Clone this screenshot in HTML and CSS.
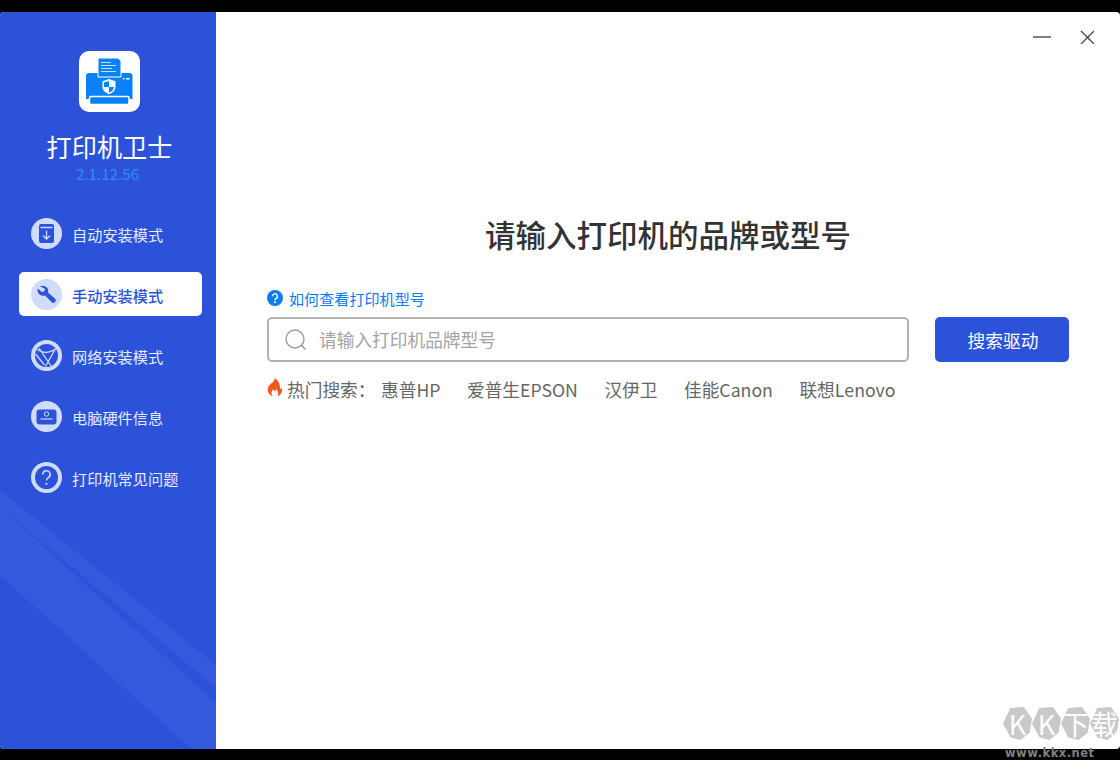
FILE: index.html
```html
<!DOCTYPE html>
<html lang="zh-CN">
<head>
<meta charset="utf-8">
<title>打印机卫士</title>
<link rel="stylesheet" href="styles.css">
</head>
<body>
<div class="app">
  <aside class="sidebar">
    <svg class="bands" viewBox="0 0 216 737" width="216" height="737" aria-hidden="true">
      <path d="M0 478L216 653V676L0 495Z" fill="#3459dc"/>
      <path d="M0 495L216 691V737H191L0 563Z" fill="#3459dc"/>
    </svg>
    <div class="brand">
      <div class="logo">
        <svg viewBox="0 0 61 61" width="61" height="61">
          <path d="M7 25a3 3 0 0 1 3-3h40.500a3 3 0 0 1 3 3v23H7Z" fill="#0a82f7"/>
          <path d="M19 8.500a1.500 1.500 0 0 1 1.500-1.500H39l3 3V26H19Z" fill="#0a82f7" stroke="#fff" stroke-width="1"/>
          <path d="M22 11.500h10M22 14.500h15M22 17.500h11M22 20.500h15" stroke="#bfe0ff" stroke-width="1.100"/>
          <rect x="44" y="27" width="1.500" height="1.500" fill="#fff"/>
          <rect x="47" y="27" width="3.500" height="1.500" fill="#fff"/>
          <path d="M30 28l6.500 2.200v5.300c0 4-3 6.500-6.500 7.800-3.500-1.300-6.500-3.800-6.500-7.800v-5.300Z" fill="#fff"/>
          <path d="M30 30v6h-5v-4.500ZM30 36h5c-.4 3-2.500 4.800-5 5.700Z" fill="#0a82f7"/>
          <rect x="10.500" y="45.500" width="39.500" height="8" rx="1.500" fill="#0a82f7" stroke="#fff" stroke-width="1.500"/>
        </svg>
      </div>
      <div class="app-name">打印机卫士</div>
      <div class="version">2.1.12.56</div>
    </div>
    <nav class="nav">
      <a class="nav-item">
        <span class="nav-icon">
          <svg viewBox="0 0 31 31" width="31" height="31">
            <path d="M8 8a2 2 0 0 1 2-2h11a2 2 0 0 1 2 2v15a2 2 0 0 1-2 2H10a2 2 0 0 1-2-2Z" fill="#2d52da"/>
            <path d="M9.500 9.500h12M15.500 12.500v8M12 17.500l3.500 3.500 3.500-3.500" fill="none" stroke="#d0dcfe" stroke-width="1.300"/>
          </svg>
        </span>
        <span class="nav-label">自动安装模式</span>
      </a>
      <a class="nav-item active">
        <span class="nav-icon">
          <svg viewBox="0 0 31 31" width="31" height="31">
            <path d="M9 7.500a5.800 5.800 0 0 1 6.800 1c1.500 1.600 1.800 3.400 1.200 5.100l7.400 6.400a2.500 2.500 0 0 1-3.400 3.500l-6.900-7.100a5.600 5.600 0 0 1-7.200-7l3.900 3.500 2.500-.7.700-2.500Z" fill="#2d52da"/>
          </svg>
        </span>
        <span class="nav-label">手动安装模式</span>
      </a>
      <a class="nav-item">
        <span class="nav-icon">
          <svg viewBox="0 0 31 31" width="31" height="31">
            <circle cx="15.500" cy="15.500" r="11.500" fill="#2d52da"/>
            <path d="M6 9.500c6 4 12 4.500 19-1M8 8l12 18M24 9.500l-9.500 17M4.500 14l9 11" fill="none" stroke="#d0dcfe" stroke-width="1.300"/>
          </svg>
        </span>
        <span class="nav-label">网络安装模式</span>
      </a>
      <a class="nav-item">
        <span class="nav-icon">
          <svg viewBox="0 0 31 31" width="31" height="31">
            <rect x="5.500" y="8.500" width="20" height="15" rx="3" fill="#2d52da"/>
            <circle cx="15.500" cy="13" r="2.200" fill="none" stroke="#d0dcfe" stroke-width="1"/>
            <path d="M9.500 18h12" stroke="#d0dcfe" stroke-width="1.200"/>
          </svg>
        </span>
        <span class="nav-label">电脑硬件信息</span>
      </a>
      <a class="nav-item">
        <span class="nav-icon">
          <svg viewBox="0 0 31 31" width="31" height="31">
            <circle cx="15.500" cy="15.500" r="11.500" fill="#2d52da"/>
            <path d="M11.800 12.500a3.700 3.700 0 1 1 5.600 3.100c-1.300.8-1.900 1.400-1.900 3" fill="none" stroke="#d0dcfe" stroke-width="1.500"/>
            <circle cx="15.500" cy="21.800" r="1.100" fill="#d0dcfe"/>
          </svg>
        </span>
        <span class="nav-label">打印机常见问题</span>
      </a>
    </nav>
  </aside>
  <main class="main">
    <div class="window-controls">
      <svg viewBox="0 0 18 14" width="18" height="14"><path d="M0 7H18" stroke="#555" stroke-width="1.300"/></svg>
      <svg viewBox="0 0 14 14" width="14" height="14"><path d="M1 1L14 14M14 1L1 14" stroke="#444" stroke-width="1.300" fill="none"/></svg>
    </div>
    <h1 class="heading">请输入打印机的品牌或型号</h1>
    <div class="search-block">
      <a class="help-link">
        <svg viewBox="0 0 16 16" width="16" height="16">
          <circle cx="8" cy="8" r="8" fill="#0a7cf5"/>
          <path d="M5.600 6.300a2.400 2.400 0 1 1 3.600 2c-.8.500-1.200.9-1.200 1.900" fill="none" stroke="#fff" stroke-width="1.400"/>
          <circle cx="8" cy="12.200" r="1" fill="#fff"/>
        </svg>
        <span>如何查看打印机型号</span>
      </a>
      <div class="search-row">
        <div class="search-input">
          <svg viewBox="0 0 22 22" width="22" height="22" fill="none" stroke="#9c9c9c" stroke-width="1.400">
            <circle cx="10" cy="10" r="9"/>
            <path d="M16.500 16.500L20.500 20.500"/>
          </svg>
          <span class="placeholder">请输入打印机品牌型号</span>
        </div>
        <button class="search-btn">搜索驱动</button>
      </div>
      <div class="hot-row">
        <svg class="flame" viewBox="0 0 16 18" width="16" height="18">
          <path d="M7.500 0c.8 3-4 5.500-6 8.500C-.5 12 1.500 17 5.800 18c-2-2-1.700-4.500.7-7 .3 1.500 1.100 2 1.700 2.500.2-1 .6-2 1.300-2.500.4 2 2.700 3 1 7 3.500-1 5.700-4.500 4.300-8.500-.5 1-1 1.500-1.800 1.800C13.500 7 11.500 2 7.500 0Z" fill="#f4581f"/>
        </svg>
        <span class="hot-label">热门搜索：</span>
        <span class="hot-list">
          <a>惠普HP</a>
          <a>爱普生EPSON</a>
          <a>汉伊卫</a>
          <a>佳能Canon</a>
          <a>联想Lenovo</a>
        </span>
      </div>
    </div>
  </main>
</div>
<div class="watermark">
  <div class="wm-tiles"><span class="tile t1">K</span><span class="tile t2">K</span><span class="tile t3">下</span><span class="tile t4">载</span></div>
  <div class="wm-url">www.kkx.net</div>
</div>
</body>
</html>
```
FILE: styles.css
```css
* { box-sizing: border-box; }
html, body { margin: 0; height: 100%; }
body {
  background: #000;
  padding-top: 12px;
  font-family: "Noto Sans CJK SC", "Noto Sans", sans-serif;
  overflow: hidden;
  position: relative;
}
a { text-decoration: none; color: inherit; }
.app {
  display: flex;
  width: 1120px;
  height: 737px;
  background: #fff;
  border-radius: 4px;
  overflow: hidden;
}
.sidebar {
  position: relative;
  flex: 0 0 216px;
  background: #2d52da;
  color: #fff;
  padding-top: 39px;
  display: flex;
  flex-direction: column;
}
.bands { position: absolute; left: 0; top: 0; }
.brand {
  position: relative;
  display: flex;
  flex-direction: column;
  align-items: center;
  padding-left: 3px;
}
.logo {
  width: 61px;
  height: 61px;
  background: #fff;
  border-radius: 10px;
}
.logo svg { display: block; }
.app-name {
  margin-top: 16px;
  font-size: 25.200px;
  line-height: 36px;
}
.version {
  font-size: 15.200px;
  line-height: 20px;
  margin: -1px 0 0 -4px;
  color: #2f8cee;
}
.nav {
  position: relative;
  margin-top: 28px;
  padding: 0 14px 0 19px;
  display: flex;
  flex-direction: column;
  gap: 17px;
}
.nav-item {
  display: flex;
  align-items: center;
  height: 44px;
  padding-left: 12px;
  border-radius: 5px;
  font-size: 15.200px;
}
.nav-item.active {
  background: #fff;
  font-weight: 500;
}
.nav-icon {
  width: 31px;
  height: 31px;
  border-radius: 50%;
  background: #d0dcfe;
  margin-right: 10px;
  flex: none;
}
.nav-icon svg { display: block; }
.nav-label { color: #e6ecff; line-height: 22px; padding-top: 1px; }
.active .nav-label { color: #2d52da; }
.main {
  flex: 1;
  position: relative;
  padding: 0 51px;
}
.window-controls {
  position: absolute;
  top: 18px;
  right: 26px;
  display: flex;
  align-items: center;
  gap: 29px;
}
.window-controls svg { display: block; }
.heading {
  margin: 200px 0 0;
  text-align: center;
  font-size: 30.500px;
  line-height: 44px;
  font-weight: 500;
  color: #333;
}
.search-block { margin-top: 31px; }
.help-link {
  display: flex;
  align-items: center;
  gap: 6px;
  height: 22px;
  font-size: 15.100px;
  color: #0a7cf5;
}
.search-row {
  display: flex;
  gap: 26px;
  margin-top: 8px;
}
.search-input {
  flex: 0 0 642px;
  height: 45px;
  border: 2px solid #b2b2b2;
  border-radius: 5px;
  display: flex;
  align-items: center;
  padding-left: 16px;
}
.search-input svg { flex: none; }
.placeholder {
  margin-left: 12px;
  font-size: 17.700px;
  color: #a3a3a3;
  padding-bottom: 1px;
}
.search-btn {
  flex: 0 0 134px;
  height: 45px;
  border: 0;
  border-radius: 5px;
  background: #2d52da;
  color: #fff;
  font: inherit;
  font-size: 17.700px;
  padding: 0 0 0 2px;
}
.hot-row {
  display: flex;
  align-items: center;
  height: 26px;
  margin-top: 14px;
  font-size: 17.700px;
  color: #666;
}
.flame { flex: none; margin-top: -5px; }
.hot-label { margin-left: 4px; width: 94px; flex: none; }
.hot-list { display: flex; gap: 26.500px; white-space: nowrap; }
.watermark {
  position: absolute;
  left: 1003px;
  top: 707px;
  width: 117px;
}
.wm-tiles { display: flex; gap: 0; }
.tile {
  width: 29px;
  height: 33px;
  background: #c9c9c9;
  color: #fff;
  font-size: 27px;
  line-height: 33px;
  text-align: center;
  clip-path: polygon(25% 3%, 72% 0, 100% 35%, 92% 78%, 60% 100%, 25% 92%, 0 50%);
}
.wm-url {
  margin-top: 6px;
  padding-left: 2px;
  font-family: "DejaVu Sans", sans-serif;
  font-size: 11.500px;
  line-height: 14px;
  font-weight: 700;
  letter-spacing: .5px;
  color: #808080;
}
```
